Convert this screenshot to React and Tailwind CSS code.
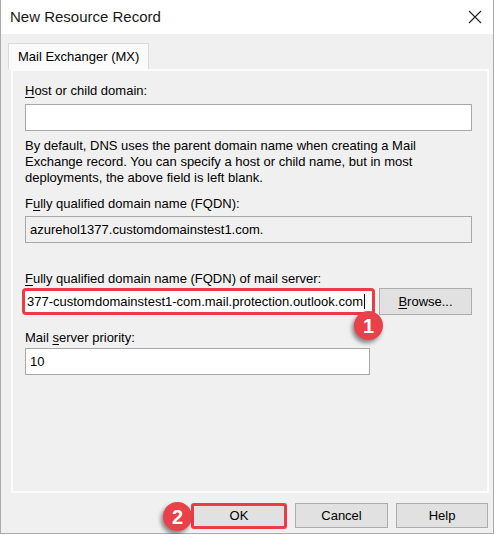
const Badge = ({ n, className }) => (
  <div
    className={`absolute w-[29px] h-[29px] rounded-full bg-[#e8414a] text-white flex items-center justify-center text-[20px] font-bold shadow-[-2px_3px_4px_rgba(0,0,0,0.45)] ${className}`}
  >
    {n}
  </div>
);

const Field = ({ className = "", children }) => (
  <div className={`h-[27px] border border-[#a8a8a8] flex items-center px-[4px] ${className}`}>
    {children}
  </div>
);

const Button = ({ children, className = "" }) => (
  <div
    className={`h-[25px] bg-[#e1e1e1] border border-[#adadad] flex items-center justify-center ${className}`}
  >
    {children}
  </div>
);

export default function App() {
  return (
    <div
      className="relative w-[494px] h-[534px] border-l border-r border-b border-[#aaaaaa] bg-[#f0f0f0] text-[13px] text-black flex flex-col"
      style={{ fontFamily: '"Liberation Sans", Arial, sans-serif' }}
    >
      {/* title bar */}
      <div className="h-[34px] bg-white flex items-center justify-between pl-[9px] pr-[11px] shrink-0">
        <span className="text-[15px] text-[#1a1a1a]">New Resource Record</span>
        <svg width="14" height="14" viewBox="0 0 14 14" className="text-[#222]">
          <path d="M1 1 L13 13 M13 1 L1 13" stroke="currentColor" strokeWidth="1.1" />
        </svg>
      </div>

      <div className="pl-[10px] pr-[4px] pt-[9px]">
        {/* tab */}
        <div className="ml-[-3px] w-[141px] h-[26px] bg-[#fafafa] border border-b-0 border-[#dadada] flex items-center pl-[9px] relative z-10">
          Mail Exchanger (MX)
        </div>

        {/* panel */}
        <div className="h-[424px] border-2 border-[#fcfcfc] pl-[12px] pr-[15px] pt-[12px] relative">
          <div className="leading-[16px]">
            <span className="underline underline-offset-2">H</span>ost or child domain:
          </div>
          <Field className="mt-[5px] bg-white" />

          <p className="mt-[7px] leading-[16px]">
            By default, DNS uses the parent domain name when creating a Mail
            <br />
            Exchange record. You can specify a host or child name, but in most
            <br />
            deployments, the above field is left blank.
          </p>

          <div className="mt-[10px] leading-[16px]">
            F<span className="underline underline-offset-2">u</span>lly qualified domain name (FQDN):
          </div>
          <Field className="mt-[4px] bg-[#f0f0f0]">azurehol1377.customdomainstest1.com.</Field>

          <div className="mt-[28px] leading-[16px]">
            <span className="underline underline-offset-2">F</span>ully qualified domain name (FQDN) of mail server:
          </div>
          <div className="mt-[1px] flex items-center gap-[4px] ml-[-3px]">
            <div className="w-[353px] h-[27px] bg-white border-[3px] border-[#ee3a44] rounded-[4px] flex items-center pl-[2px] overflow-hidden whitespace-nowrap">
              377-customdomainstest1-com.mail.protection.outlook.com
              <span className="ml-[1px] w-px h-[15px] bg-black" />
            </div>
            <Button className="w-[93px] h-[27px]">
              <span>
                <span className="underline underline-offset-2">B</span>rowse...
              </span>
            </Button>
          </div>

          <div className="mt-[15px] leading-[16px]">
            Mail <span className="underline underline-offset-2">s</span>erver priority:
          </div>
          <Field className="mt-[2px] w-[345px] h-[26px] bg-white">10</Field>

          <Badge n="1" className="left-[341px] top-[240px]" />
        </div>
      </div>

      {/* bottom buttons */}
      <div className="flex justify-end gap-[8px] pr-[5px] mt-[10px] relative">
        <div className="w-[96px] h-[26px] border-[3px] border-[#ee3a44] rounded-[3px] bg-[#e1e1e1] flex items-center justify-center">
          OK
        </div>
        <Button className="w-[93px]">Cancel</Button>
        <Button className="w-[92px]">Help</Button>
        <Badge n="2" className="left-[162px] top-[-1px]" />
      </div>
    </div>
  );
}
